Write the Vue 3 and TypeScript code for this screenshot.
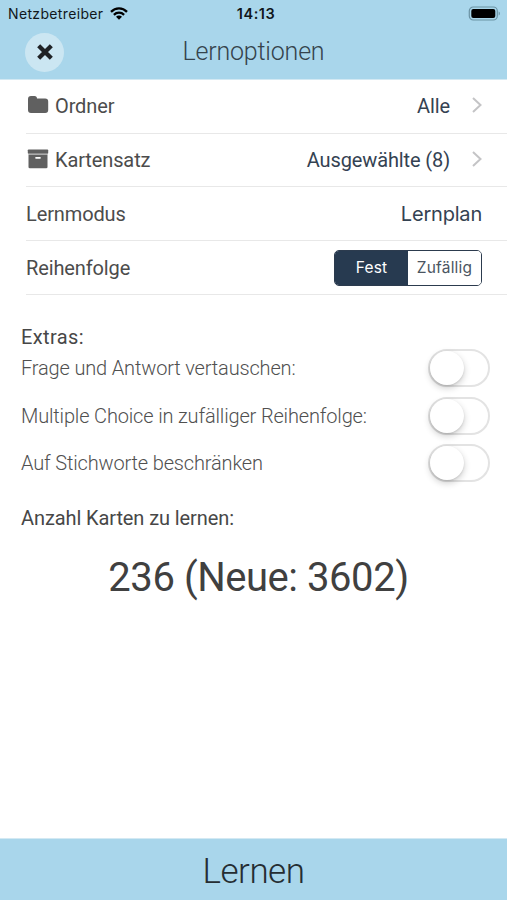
<script setup lang="ts">
import { ref } from 'vue'

interface Extra {
  label: string
  on: boolean
}

const orders: string[] = ['Fest', 'Zufällig']
const order = ref<string>('Fest')
const extras = ref<Extra[]>([
  { label: 'Frage und Antwort vertauschen:', on: false },
  { label: 'Multiple Choice in zufälliger Reihenfolge:', on: false },
  { label: 'Auf Stichworte beschränken', on: false },
])
</script>

<template>
  <div class="screen">
    <header class="top">
      <div class="status">
        <div class="carrier">
          <span class="carrier-name">Netzbetreiber</span>
          <svg class="wifi" width="18" height="13" viewBox="0 0 18 13">
            <g fill="none" stroke="#000" stroke-width="2.3">
              <path d="M1 4.900C5.500.3 12.500.3 17 4.900" />
              <path d="M3.900 7.800c2.900-2.800 7.300-2.800 10.200 0" />
            </g>
            <path d="M9 12.700 6 9.700c1.600-1.500 4.400-1.500 6 0z" />
          </svg>
        </div>
        <span class="clock">14:13</span>
        <svg class="battery" width="33" height="15" viewBox="0 0 33 15">
          <rect x="1.300" y="1" width="28" height="13" rx="4" fill="none" stroke="#6b93a4" stroke-width="1.200" />
          <rect x="3.300" y="3" width="24" height="9" rx="2" />
          <path d="M30.700 5.500c1.600.5 1.600 3.500 0 4z" fill="#6b93a4" />
        </svg>
      </div>
      <div class="titlebar">
        <button class="close" aria-label="Schließen">
          <svg width="16" height="16" viewBox="0 0 16 16">
            <path d="M3.200 3.200l9.600 9.600M12.800 3.200l-9.600 9.600" stroke="#202326" stroke-width="4.300" stroke-linecap="square" stroke-linejoin="round" />
          </svg>
        </button>
        <h1 class="title">Lernoptionen</h1>
      </div>
    </header>

    <section class="rows">
      <div class="row">
        <svg class="icon" width="22" height="20" viewBox="0 0 22 20">
          <path d="M1 4Q1 1 4 1h3.500Q10 1 10 3.500H18.200Q21.200 3.500 21.200 6.500v8.500q0 3-3 3H4q-3 0-3-3z" fill="#606060" />
        </svg>
        <span class="label">Ordner</span>
        <span class="value">Alle</span>
        <svg class="chevron" width="12" height="18" viewBox="0 0 12 18"><path d="M3 2l7.500 7L3 16" fill="none" stroke="#c4c4c6" stroke-width="2" /></svg>
      </div>
      <div class="row">
        <svg class="icon" width="22" height="20" viewBox="0 0 22 20">
          <rect x=".8" y=".5" width="20.400" height="4.300" rx=".8" fill="#606060" />
          <path d="M1.500 5.500h19v12.500q0 1.300-1.300 1.300H2.800q-1.300 0-1.300-1.300z" fill="#606060" />
          <path d="M1.500 5.200h19" stroke="#a8a8a8" stroke-width=".8" />
          <rect x="8.200" y="8" width="5.600" height="1.700" rx=".8" fill="#fff" />
        </svg>
        <span class="label">Kartensatz</span>
        <span class="value">Ausgewählte (8)</span>
        <svg class="chevron" width="12" height="18" viewBox="0 0 12 18"><path d="M3 2l7.500 7L3 16" fill="none" stroke="#c4c4c6" stroke-width="2" /></svg>
      </div>
      <div class="row">
        <span class="label">Lernmodus</span>
        <span class="value plan">Lernplan</span>
      </div>
      <div class="row order-row">
        <span class="label">Reihenfolge</span>
        <div class="segmented">
          <button v-for="o in orders" :key="o" class="segment" :class="{ active: o === order }" @click="order = o">{{ o }}</button>
        </div>
      </div>
    </section>

    <section class="extras">
      <h2 class="heading extras-heading">Extras:</h2>
      <div v-for="e in extras" :key="e.label" class="extra">
        <span class="extra-label">{{ e.label }}</span>
        <button class="switch" :class="{ on: e.on }" role="switch" :aria-checked="e.on" @click="e.on = !e.on">
          <span class="knob"></span>
        </button>
      </div>
    </section>

    <section class="count">
      <h2 class="heading">Anzahl Karten zu lernen:</h2>
      <p class="total">236 (Neue: 3602)</p>
    </section>

    <button class="learn">Lernen</button>
  </div>
</template>

<style>
body {
  margin: 0;
  background: #fff;
}
</style>

<style scoped>
.screen {
  width: 507px;
  height: 900px;
  display: flex;
  flex-direction: column;
  overflow: hidden;
  background: #fff;
  font-family: Roboto, sans-serif;
  color: #474747;
}
button {
  margin: 0;
  padding: 0;
  border: 0;
  font: inherit;
}
h1, h2, p {
  margin: 0;
  font-weight: 400;
}
.top {
  height: 79px;
  flex: none;
  background: #a9d6eb;
  border-bottom: 1px solid #d3e9f3;
}
.status {
  height: 27px;
  display: grid;
  grid-template-columns: 1fr auto 1fr;
  align-items: center;
  padding: 0 6px 0 8px;
  font-family: Inter, sans-serif;
  color: #10171b;
}
.carrier {
  display: flex;
  align-items: center;
  gap: 7px;
}
.carrier-name {
  font-size: 14px;
  letter-spacing: 0.35px;
}
.clock {
  font-size: 14.5px;
  font-weight: 600;
  letter-spacing: 0.5px;
  padding-left: 3px;
}
.battery {
  justify-self: end;
  margin-top: -1px;
}
.titlebar {
  height: 50px;
  display: grid;
  grid-template-columns: 64px 1fr 64px;
  align-items: center;
}
.close {
  width: 39px;
  height: 39px;
  margin-left: 25px;
  border-radius: 50%;
  background: #cbe6f2;
  display: flex;
  align-items: center;
  justify-content: center;
}
.title {
  text-align: center;
  font-size: 25px;
  font-weight: 300;
  line-height: 30px;
  letter-spacing: -0.2px;
  color: #35434c;
}
.rows {
  margin-left: 26px;
}
.row {
  height: 53.65px;
  box-sizing: border-box;
  display: flex;
  align-items: center;
  padding-right: 25px;
  border-bottom: 1px solid #e8e8e8;
  font-size: 20px;
  letter-spacing: -0.12px;
}
.order-row {
  padding-top: 1.5px;
}
.icon {
  margin: -2px 6px 0 1px;
}
.label {
  color: #4c4c4c;
  flex: 1;
}
.value {
  color: #344252;
}
.chevron {
  margin-left: 20px;
  margin-top: -2px;
}
.plan {
  font-family: Inter, sans-serif;
  letter-spacing: -0.2px;
}
.segmented {
  width: 148px;
  height: 36px;
  box-sizing: border-box;
  display: grid;
  grid-template-columns: 1fr 1fr;
  border: 1px solid #2c3b4e;
  border-radius: 5px;
  overflow: hidden;
}
.segment {
  background: #fff;
  color: #4b5561;
  font-family: Inter, sans-serif;
  font-size: 15.5px;
  letter-spacing: 0.2px;
}
.segment.active {
  background: #273a50;
  color: #fff;
}
.extras {
  margin-top: 29px;
  padding: 0 17px 0 21px;
}
.heading {
  font-size: 20px;
  line-height: 28px;
  letter-spacing: -0.1px;
}
.extras-heading {
  line-height: 27.5px;
  letter-spacing: 0.4px;
}
.extra {
  height: 47.7px;
  display: flex;
  justify-content: space-between;
}
.extra-label {
  font-size: 20px;
  font-weight: 300;
  line-height: 34px;
  letter-spacing: -0.16px;
  color: #505050;
}
.switch {
  width: 62px;
  height: 38px;
  margin-top: -2px;
  box-sizing: border-box;
  border: 2px solid #e3e3e3;
  border-radius: 19px;
  background: #fff;
  flex: none;
}
.knob {
  display: block;
  width: 34px;
  height: 34px;
  border-radius: 50%;
  background: #fff;
  box-shadow: 0 3px 7px rgba(0, 0, 0, 0.2), 0 1px 2px rgba(0, 0, 0, 0.1);
}
.switch.on {
  background: #a9d6eb;
}
.switch.on .knob {
  margin-left: 24px;
}
.count {
  flex: 1;
  padding: 10px 0 0 21px;
}
.total {
  margin: 21px 11px 0 0;
  text-align: center;
  font-size: 40px;
  line-height: 50px;
  letter-spacing: -0.45px;
  color: #404040;
}
.learn {
  height: 61px;
  flex: none;
  padding-top: 4px;
  background: #a9d6eb;
  box-shadow: 0 -1px 0 #d3e9f3;
  font-size: 35px;
  font-weight: 300;
  letter-spacing: -0.5px;
  color: #252d32;
}
</style>
